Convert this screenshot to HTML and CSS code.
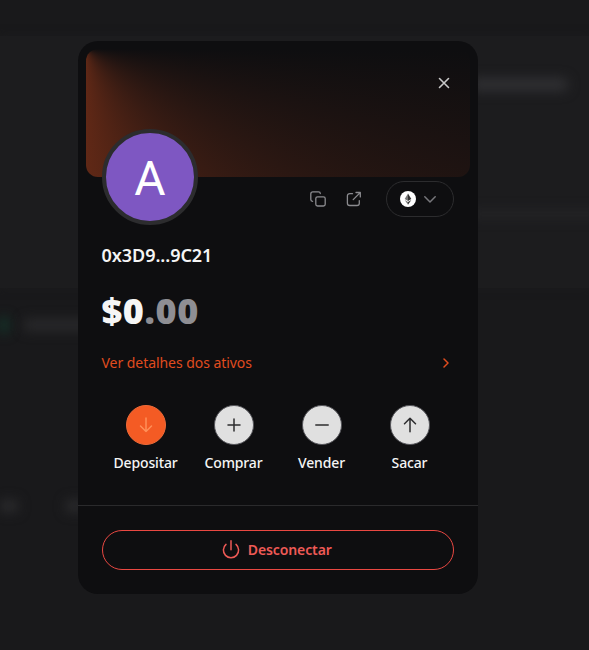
FILE: index.html
```html
<!DOCTYPE html>
<html lang="pt-BR">
	<head>
		<meta charset="utf-8">
		<title>Carteira</title>
		<link rel="stylesheet" href="styles.css">
	</head>
	<body>
		<!-- Dimmed page behind the modal -->
		<div class="backdrop">
			<div class="band top_band">
				<div class="smudge title_smudge"></div>
				<div class="smudge line_smudge"></div>
			</div>
			<div class="smudge_row status_row">
				<div class="smudge green_smudge"></div>
				<div class="smudge label_smudge"></div>
			</div>
			<div class="smudge_row tab_row">
				<div class="smudge tab_smudge"></div>
				<div class="smudge tab_smudge"></div>
			</div>
		</div>

		<!-- Wallet modal -->
		<div class="modal">
			<div class="banner">
				<button type="button" class="icon_btn close" aria-label="Fechar">
					<svg width="12" height="12" viewBox="0 0 12 12"><path d="M1.5 1.5l9 9M10.5 1.5l-9 9"/></svg>
				</button>
			</div>

			<div class="profile">
				<div class="avatar">A</div>
				<div class="tools">
					<button type="button" class="icon_btn" aria-label="Copiar">
						<svg width="16" height="16" viewBox="0 0 16 16">
							<path d="M2.6 10.3C1.5 10.3.8 9.6.8 8.5V2.9C.8 1.7 1.7.8 2.9.8h5.6c1 0 1.8.7 1.8 1.7"/>
							<rect x="5.8" y="5.8" width="9.4" height="9.2" rx="1.8"/>
						</svg>
					</button>
					<button type="button" class="icon_btn" aria-label="Abrir">
						<svg width="16" height="16" viewBox="0 0 16 16">
							<path d="M6.5 2.7H3.8C2.3 2.7 1.4 3.6 1.4 5v7.2c0 1.4.9 2.3 2.4 2.3H11c1.4 0 2.3-.9 2.3-2.3V9.6M7.2 8.6l7-7M10 1.5h4.3v4.4"/>
						</svg>
					</button>
					<button type="button" class="network" aria-label="Rede">
						<svg class="eth" width="16" height="16" viewBox="0 0 16 16">
							<circle cx="8" cy="8" r="8" fill="#fff"/>
							<path d="M8 2.4L4.7 8.1 8 10.1z" fill="#777"/>
							<path d="M8 2.4l3.3 5.7L8 10.1z" fill="#333"/>
							<path d="M4.7 8.9L8 10.9v2.8z" fill="#777"/>
							<path d="M11.3 8.9L8 10.9v2.8z" fill="#333"/>
						</svg>
						<svg width="12" height="7" viewBox="0 0 12 7"><path d="M.8 .8L6 6 11.2 .8"/></svg>
					</button>
				</div>
			</div>

			<div class="account">
				<div class="address">0x3D9...9C21</div>
				<div class="balance">$0<span class="cents">.00</span></div>
				<a class="details">
					<span>Ver detalhes dos ativos</span>
					<svg width="6" height="10" viewBox="0 0 6 10"><path d="M1 1l4 4-4 4"/></svg>
				</a>
			</div>

			<!-- Action buttons -->
			<div class="actions">
				<div class="action">
					<div class="circle deposit">
						<svg width="16" height="16" viewBox="0 0 16 16"><path d="M8 1v13.5M2.5 9L8 14.5 13.5 9"/></svg>
					</div>
					<span>Depositar</span>
				</div>
				<div class="action">
					<div class="circle">
						<svg width="16" height="16" viewBox="0 0 16 16"><path d="M8 2v12M2 8h12"/></svg>
					</div>
					<span>Comprar</span>
				</div>
				<div class="action">
					<div class="circle">
						<svg width="16" height="16" viewBox="0 0 16 16"><path d="M1.8 8h12.4"/></svg>
					</div>
					<span>Vender</span>
				</div>
				<div class="action">
					<div class="circle">
						<svg width="16" height="16" viewBox="0 0 16 16"><path d="M8 14.8V1.2M2.5 6.7L8 1.2l5.5 5.5"/></svg>
					</div>
					<span>Sacar</span>
				</div>
			</div>

			<div class="footer">
				<button type="button" class="disconnect">
					<svg width="18" height="19" viewBox="0 0 18 19"><path d="M9 .8v9M4 4.4a7.6 7.6 0 1 0 10 0"/></svg>
					<span>Desconectar</span>
				</button>
			</div>
		</div>
	</body>
</html>
```

FILE: styles.css
```css
* {
	box-sizing: border-box;
}
body {
	margin: 0;
	height: 650px;
	padding: 41px 0 0 78px;
	overflow: hidden;
	background-color: #19191b;
	font-family: "Noto Sans", sans-serif;
	color: #f5f5f5;
}
svg {
	display: block;
	fill: none;
	stroke: currentColor;
	stroke-width: 1.5;
	stroke-linecap: round;
	stroke-linejoin: round;
}
button {
	padding: 0;
	border: none;
	background: none;
	font-family: inherit;
	color: inherit;
}

/* page behind */
.backdrop {
	position: absolute;
	top: 0;
	left: 0;
	width: 589px;
	height: 650px;
	overflow: hidden;
	padding-top: 36px;
}
.band {
	height: 252px;
	background-color: #1c1c1e;
	box-shadow: 0 0 8px #1c1c1e;
	padding: 42px 0 0 470px;
}
.smudge {
	filter: blur(6px);
	background-color: #303033;
}
.title_smudge {
	width: 98px;
	height: 13px;
	border-radius: 6px;
}
.line_smudge {
	width: 130px;
	height: 8px;
	margin-top: 119px;
	background-color: #252527;
}
.smudge_row {
	display: flex;
	align-items: center;
}
.status_row {
	gap: 16px;
	margin-top: 29px;
}
.green_smudge {
	width: 8px;
	height: 16px;
	background-color: #12382c;
}
.label_smudge {
	width: 70px;
	height: 12px;
	background-color: #29292b;
}
.tab_row {
	gap: 48px;
	margin-top: 167px;
}
.tab_smudge {
	width: 18px;
	height: 12px;
	background-color: #2b2b2d;
}

/* modal */
.modal {
	position: relative;
	width: 400px;
	height: 553px;
	border-radius: 20px;
	background-color: #0e0e10;
	padding-top: 8px;
}
.banner {
	display: flex;
	justify-content: flex-end;
	height: 128px;
	margin: 0 8px;
	padding: 28px 20px 0 0;
	border-radius: 12px;
	background: conic-gradient(from 90deg at 0 0, #0e0e10 0deg, #602816 90deg, #602816 180deg, #0e0e10 360deg);
}
.icon_btn {
	width: 16px;
	height: 16px;
	color: #8b8b8f;
}
.icon_btn svg {
	stroke-width: 1.3;
}
.close {
	display: flex;
	width: 12px;
	height: 12px;
	color: #c9c9c9;
}
.close svg {
	stroke-width: 1.6;
}
.profile {
	display: flex;
	justify-content: space-between;
	height: 96px;
	margin: -48px 24px 0;
}
.avatar {
	width: 96px;
	height: 96px;
	border: 4px solid #2c2c2e;
	border-radius: 50%;
	background-color: #7e57c2;
	font-family: Roboto, sans-serif;
	font-size: 48px;
	line-height: 91px;
	text-align: center;
	color: #fff;
}
.tools {
	display: flex;
	align-items: center;
	height: 36px;
	margin-top: 52px;
	gap: 20px;
}
.network {
	display: flex;
	align-items: center;
	gap: 8px;
	width: 68px;
	height: 36px;
	margin-left: 4px;
	padding-left: 13px;
	border: 1px solid #2c2c2e;
	border-radius: 18px;
	color: #77777b;
}
.eth {
	stroke: none;
}
.account {
	margin: 0 24px 0 23.5px;
}
.address {
	margin-top: 18px;
	font-size: 18px;
	font-weight: 600;
	line-height: 24px;
	letter-spacing: -0.05px;
}
.balance {
	margin-top: 22px;
	font-size: 36px;
	font-weight: 900;
	line-height: 44px;
	letter-spacing: 0.6px;
}
.cents {
	color: #8e8e93;
}
.details {
	display: flex;
	justify-content: space-between;
	align-items: center;
	margin-top: 20px;
	padding-right: 5px;
	font-size: 14px;
	line-height: 20px;
	letter-spacing: -0.05px;
	color: #e04c1f;
}
.actions {
	display: flex;
	margin: 32px 24px 0;
}
.action {
	display: flex;
	flex-direction: column;
	align-items: center;
	width: 88px;
	font-size: 14px;
	font-weight: 500;
	line-height: 20px;
	letter-spacing: -0.15px;
}
.action span {
	padding-right: 1px;
}
.circle {
	display: flex;
	align-items: center;
	justify-content: center;
	width: 40px;
	height: 40px;
	margin-bottom: 8px;
	border: 1px solid #55555a;
	border-radius: 50%;
	background-color: #e0e0e0;
	color: #2c2c2e;
}
.deposit {
	border-color: #ee6a38;
	background-color: #f45b24;
	color: #ff9058;
}
.footer {
	margin-top: 32px;
	padding: 24px;
	border-top: 1px solid #2a2a2c;
}
.disconnect {
	display: flex;
	align-items: center;
	justify-content: center;
	gap: 7.5px;
	width: 352px;
	height: 40px;
	padding: 0 2px 2px 0;
	border: 1px solid #ea4842;
	border-radius: 20px;
	font-size: 14px;
	font-weight: 600;
	letter-spacing: -0.1px;
	color: #ee5a56;
}
.disconnect svg {
	margin-top: 1px;
}
```
